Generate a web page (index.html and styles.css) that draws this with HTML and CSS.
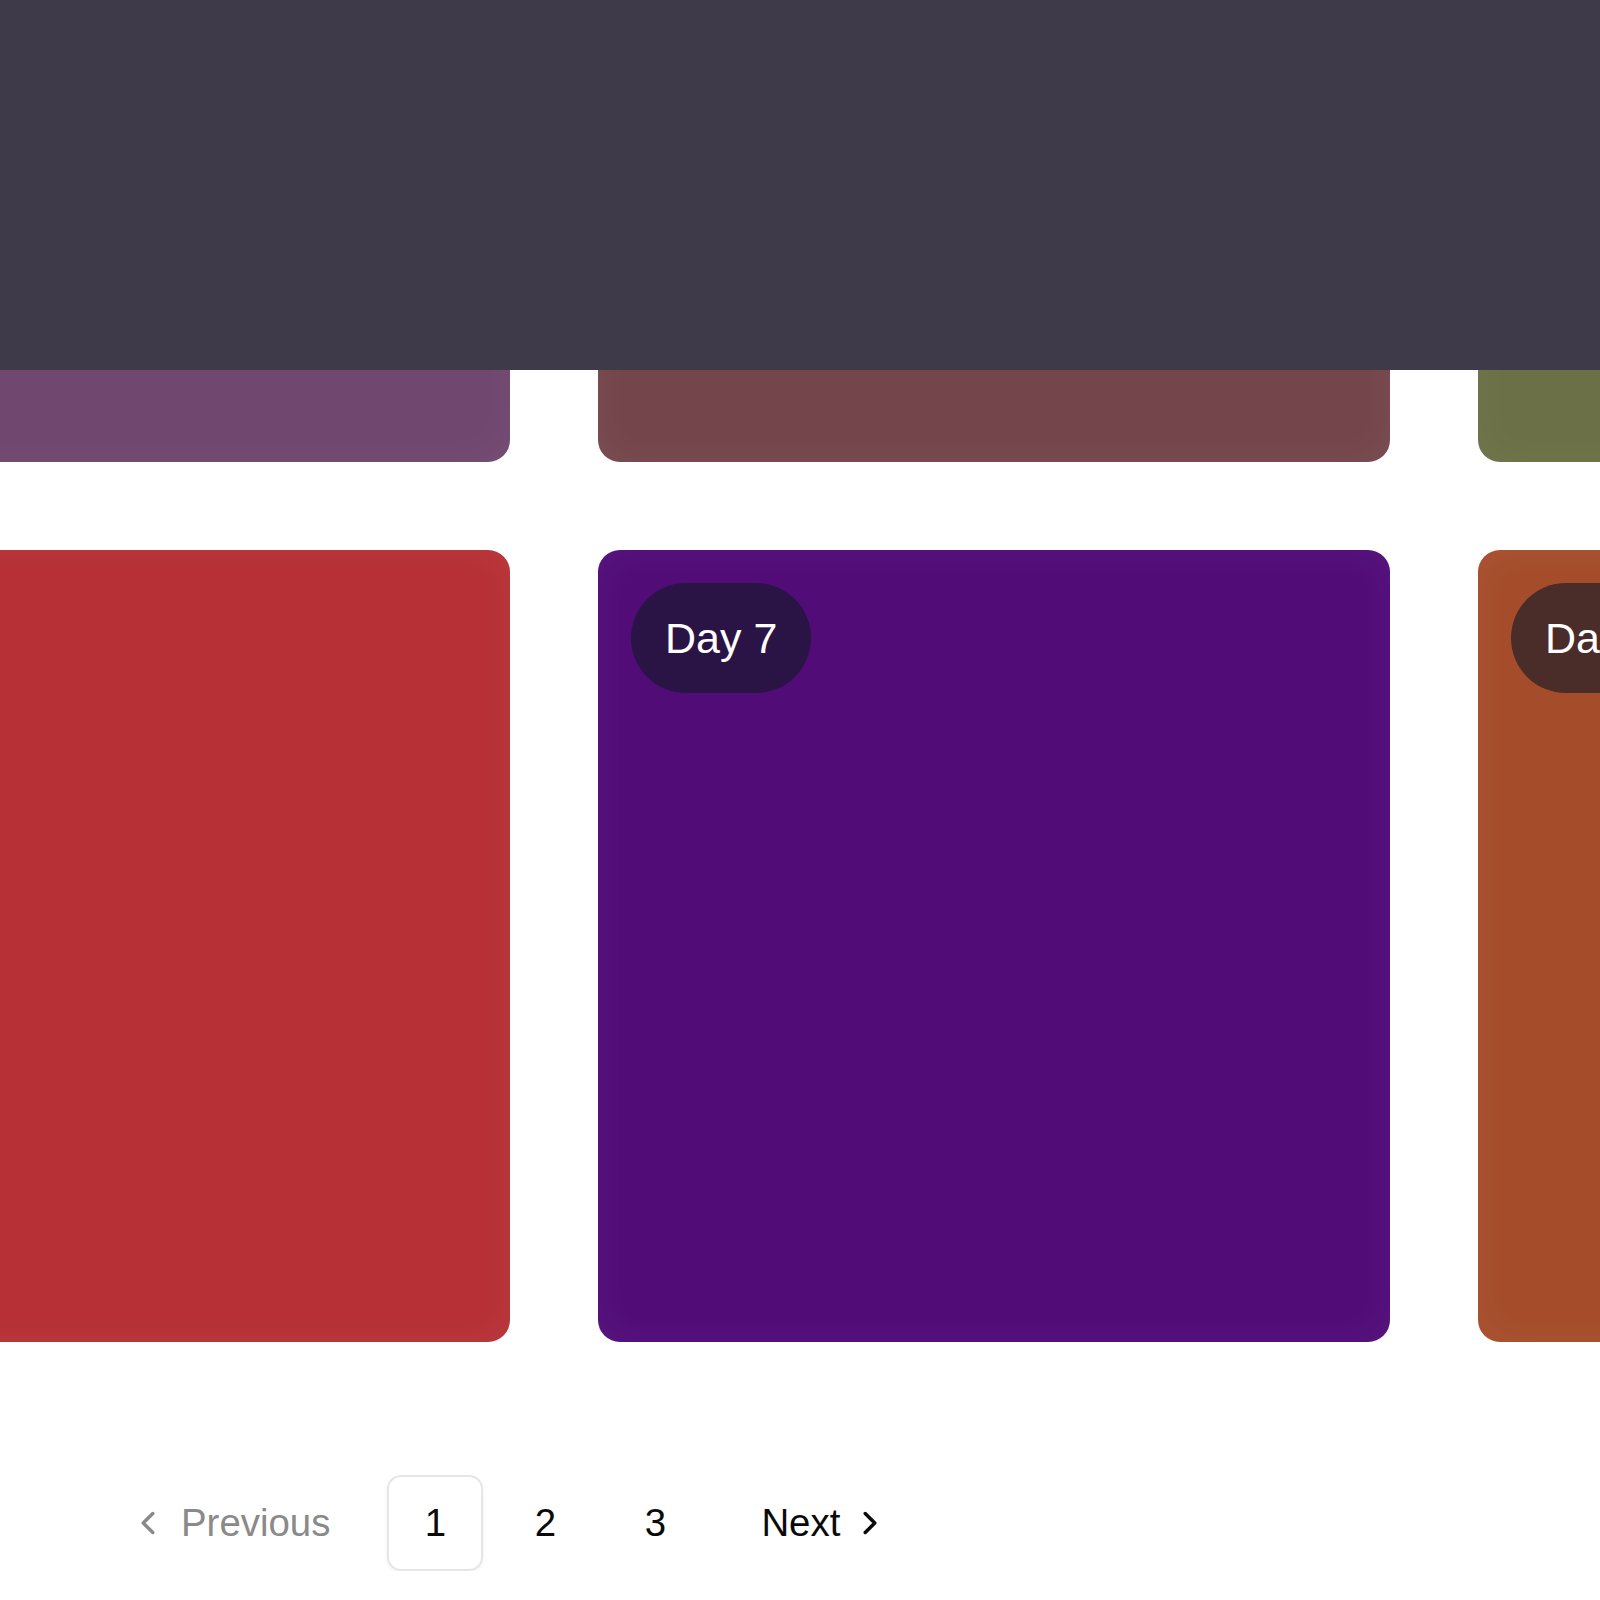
FILE: index.html
```html
<!DOCTYPE html>
<html lang="en">
<head>
<meta charset="utf-8">
<title>Days</title>
<link rel="stylesheet" href="styles.css">
</head>
<body>
<header class="topbar"></header>
<main class="page">
  <section class="grid">
    <div class="card c-plum"></div>
    <div class="card c-rosewood"></div>
    <div class="card c-olive"></div>
    <div class="card c-red"></div>
    <div class="card c-violet"><span class="pill">Day 7</span></div>
    <div class="card c-rust"><span class="pill">Day 8</span></div>
  </section>
  <nav class="pagination" aria-label="pagination">
    <a class="pg-link pg-prev" href="#">
      <svg class="chev" viewBox="0 0 24 24" fill="none" stroke="currentColor" stroke-width="2.2" stroke-linecap="round" stroke-linejoin="round"><path d="m15 18-6-6 6-6"/></svg>
      <span>Previous</span>
    </a>
    <a class="pg-link pg-num active" href="#">1</a>
    <a class="pg-link pg-num" href="#">2</a>
    <a class="pg-link pg-num" href="#">3</a>
    <a class="pg-link pg-next" href="#">
      <span>Next</span>
      <svg class="chev" viewBox="0 0 24 24" fill="none" stroke="currentColor" stroke-width="2.2" stroke-linecap="round" stroke-linejoin="round"><path d="m9 18 6-6-6-6"/></svg>
    </a>
  </nav>
</main>
</body>
</html>
```

FILE: styles.css
```css
html, body {
  margin: 0;
  padding: 0;
  background: #ffffff;
  font-family: "Liberation Sans", Arial, Helvetica, sans-serif;
  overflow: hidden;
}

.topbar {
  position: fixed;
  top: 0;
  left: 0;
  right: 0;
  height: 370px;
  background: #3e3a49;
  z-index: 10;
}

.page {
  display: flex;
  flex-direction: column;
}

.grid {
  display: grid;
  grid-template-columns: repeat(3, 792px);
  grid-auto-rows: 792px;
  gap: 88px;
  margin-left: -282px;
  margin-top: -330px;
}

.card {
  border-radius: 22px;
  padding: 33px;
  box-sizing: border-box;
  display: flex;
  align-items: flex-start;
  box-shadow: inset 0 0 40px rgba(255, 255, 255, 0.05);
}

.c-plum { background: #70476f; }
.c-rosewood { background: #74464b; }
.c-olive { background: #6b7046; }
.c-red { background: #b63035; }
.c-violet { background: #510c78; }
.c-rust { background: #a54d2b; }

.pill {
  display: inline-flex;
  align-items: center;
  height: 110px;
  padding: 0 34px;
  border-radius: 999px;
  background: rgba(17, 24, 39, 0.62);
  color: #ffffff;
  font-size: 43px;
  white-space: nowrap;
}

.pagination {
  display: flex;
  align-items: center;
  gap: 14px;
  margin-top: 133px;
  margin-left: 105px;
}

.pg-link {
  display: inline-flex;
  align-items: center;
  justify-content: center;
  height: 96px;
  box-sizing: border-box;
  font-size: 38.4px;
  color: #0a0a0a;
  text-decoration: none;
}

.pg-num {
  width: 96px;
  border-radius: 14px;
  border: 2px solid transparent;
}

.pg-num.active {
  border-color: #e6e6e6;
  box-shadow: 0 2px 4px rgba(0, 0, 0, 0.05);
}

.pg-prev {
  color: #8a8a8a;
  padding: 0 43px 0 24px;
  gap: 14px;
}

.pg-next {
  padding: 0 24px 0 44px;
  gap: 11px;
}

.chev {
  width: 38px;
  height: 38px;
  flex: none;
}
```
